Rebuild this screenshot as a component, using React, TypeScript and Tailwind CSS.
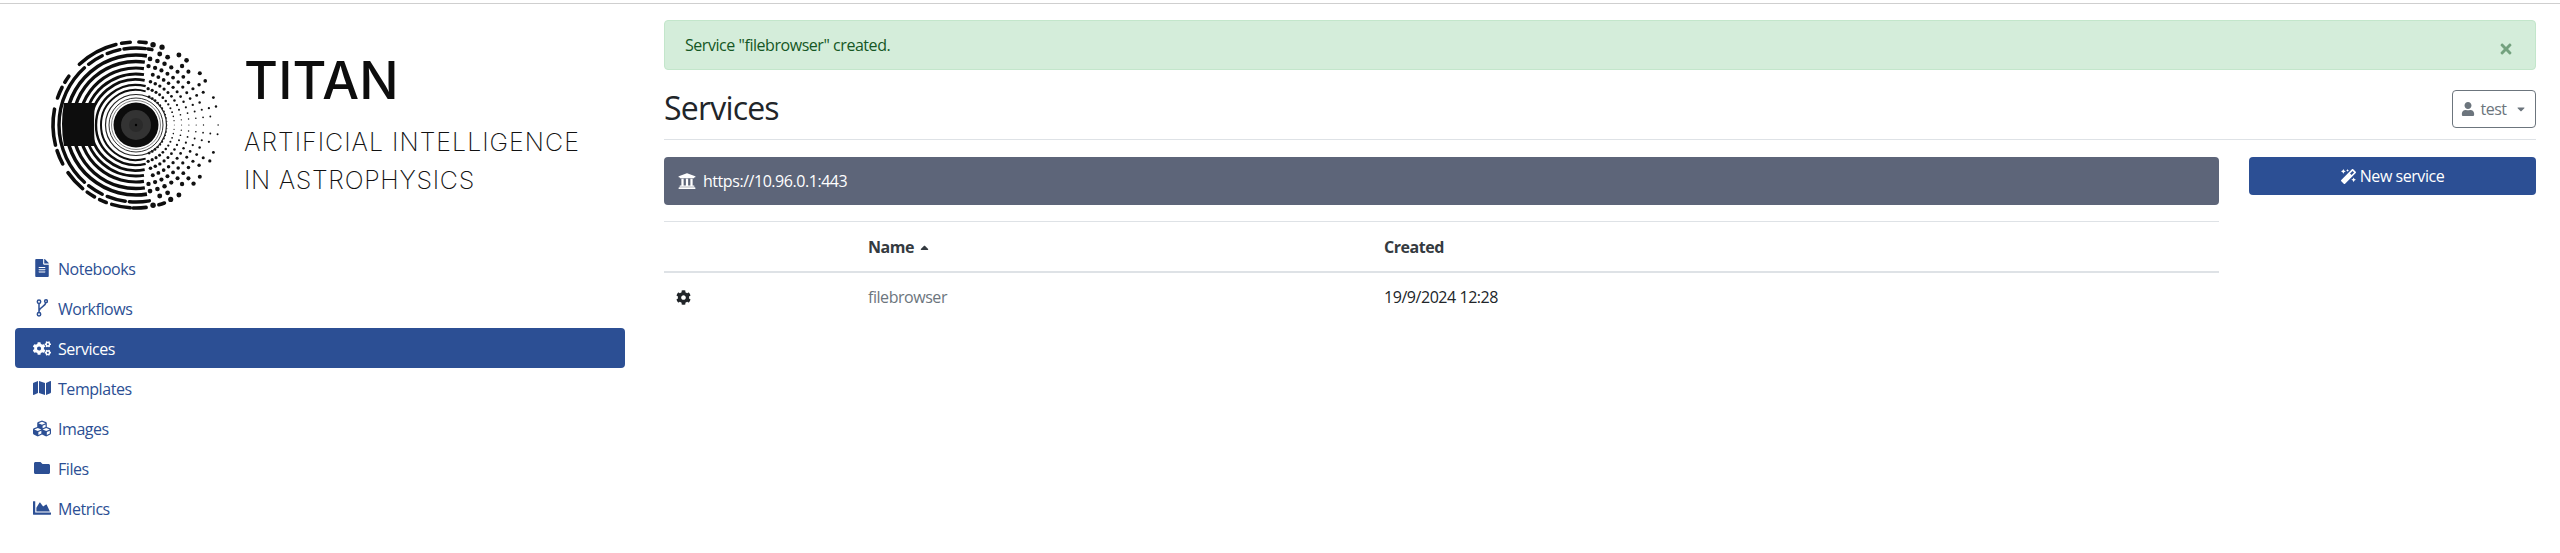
import { FaCaretDown, FaCaretUp, FaChartArea, FaCog, FaCogs, FaCubes, FaFileAlt, FaFolder, FaMagic, FaMap, FaTimes, FaUniversity, FaUser } from 'react-icons/fa';

function ForkIcon({ className }: { className?: string }) {
  return (
    <svg viewBox="0 0 12 18" className={className} fill="none" stroke="currentColor" strokeWidth="1.5">
      <circle cx="3" cy="2.8" r="1.7" />
      <circle cx="3" cy="15.2" r="1.7" />
      <circle cx="10" cy="2.2" r="1.4" />
      <path d="M3 4.5V13.5M9.8 3.6C9.6 7.5 3.6 7.5 3 12" />
    </svg>
  );
}

const NAV = [
  { label: 'Notebooks', icon: FaFileAlt, size: 'text-[18px]' },
  { label: 'Workflows', icon: ForkIcon, size: 'w-[12px] h-[18px]' },
  { label: 'Services', icon: FaCogs, size: 'text-[19px]', active: true },
  { label: 'Templates', icon: FaMap, size: 'text-[18px]' },
  { label: 'Images', icon: FaCubes, size: 'text-[19px]' },
  { label: 'Files', icon: FaFolder, size: 'text-[16px]' },
  { label: 'Metrics', icon: FaChartArea, size: 'text-[18px]' },
];

const CX = 96;
const CY = 95;

// angle in degrees, 0 = top, counter-clockwise through the left side
function point(r: number, deg: number) {
  const a = (deg * Math.PI) / 180;
  return [CX - r * Math.sin(a), CY - r * Math.cos(a)];
}

function arc(r: number, from: number, to: number) {
  const [x1, y1] = point(r, from);
  const [x2, y2] = point(r, to);
  const large = to - from > 180 ? 1 : 0;
  return `M${x1.toFixed(2)} ${y1.toFixed(2)}A${r} ${r} 0 ${large} 0 ${x2.toFixed(2)} ${y2.toFixed(2)}`;
}

const OUTER: [number, number][] = [
  [-7, -2], [4, 10], [14, 43], [54, 59], [63, 71], [79, 104], [108, 118],
  [125, 140], [144, 150], [154, 159], [163, 176], [178, 187], [196, 200],
];
const SECOND: [number, number][] = [
  [-12, -9], [-7, 9], [12, 22], [26, 38], [42, 138], [142, 154], [158, 172], [175, 190],
];
const RINGS: [number, number, number][] = [
  [70, 3.6, 9], [63.5, 3.4, 8], [57, 3.2, 8], [51, 3, 9], [45.5, 2.8, 11], [40, 2.4, 14], [35, 2, 16],
];

const DOTS: { x: number; y: number; r: number }[] = [];
for (let deg = -78; deg <= 78; deg += 6.5) {
  const s = Math.abs(Math.sin((deg * Math.PI) / 180));
  for (let i = 0; i < 8; i++) {
    const r = 31 + i * 7.3;
    if (i > 5 && (Math.round(deg * 2) + i * 13) % 3 === 0) continue;
    const a = (deg * Math.PI) / 180;
    const x = CX + r * Math.cos(a);
    const y = CY + r * Math.sin(a);
    if (x < CX + 12) continue;
    DOTS.push({ x, y, r: 0.45 + s * 1.1 + (i / 7) * (0.3 + s * 0.9) });
  }
}

function TitanMark() {
  return (
    <svg viewBox="0 0 192 190" className="w-[192px] h-[190px] shrink-0">
      <defs>
        <clipPath id="left-half">
          <rect x="0" y="0" width={CX + 12} height="190" />
        </clipPath>
      </defs>
      <g fill="none" stroke="#0d0d0d" strokeLinecap="round">
        {OUTER.map(([a, b]) => (
          <path key={a} d={arc(83, a, b)} strokeWidth="3.6" />
        ))}
        {SECOND.map(([a, b]) => (
          <path key={a} d={arc(77, a, b)} strokeWidth="3.4" />
        ))}
      </g>
      <g clipPath="url(#left-half)" fill="none" stroke="#0d0d0d" strokeLinecap="butt">
        {RINGS.map(([r, w, gap]) => (
          <path key={r} d={arc(r, -gap, 180 + gap)} strokeWidth={w} />
        ))}
      </g>
      <path d="M24 73Q20 94 24 116L55 116Q53 94 55 73Z" fill="#0d0d0d" />
      {DOTS.map((d, i) => (
        <circle key={i} cx={d.x} cy={d.y} r={d.r} fill="#111" />
      ))}
      <circle cx={CX} cy={CY} r="30.5" fill="none" stroke="#222" strokeWidth="1.2" />
      <circle cx={CX} cy={CY} r="27" fill="none" stroke="#333" strokeWidth="1" />
      <circle cx={CX} cy={CY} r="24.5" fill="none" stroke="#555" strokeWidth="0.7" />
      <circle cx={CX} cy={CY} r="22.5" fill="#0c0c0c" />
      <circle cx={CX} cy={CY} r="15" fill="#333" />
      <circle cx={CX} cy={CY} r="7" fill="#2a2a2a" />
      <circle cx={CX} cy={CY} r="1.2" fill="#000" />
    </svg>
  );
}

function Logo() {
  return (
    <div className="flex h-[230px] items-start pl-[40px] pt-[30px]">
      <TitanMark />
      <div className="ml-[12px] flex flex-col font-['Inter',sans-serif] whitespace-nowrap">
        <span className="mt-[26px] h-[50px] text-[52px] leading-[50px] font-medium tracking-[0.2px] text-[#0d0d0d]">TITAN</span>
        <span className="mt-[24px] h-[24px] text-[25px] leading-[24px] font-extralight tracking-[1px] text-[#111]">ARTIFICIAL INTELLIGENCE</span>
        <span className="mt-[14px] h-[24px] text-[25px] leading-[24px] font-extralight tracking-[0.7px] text-[#111]">IN ASTROPHYSICS</span>
      </div>
    </div>
  );
}

export default function App() {
  return (
    <div className="h-[553px] overflow-hidden bg-white font-['Open_Sans','Noto_Sans',sans-serif] text-[16px] tracking-[-0.45px] text-[#212529]">
      <div className="h-[4px] border-b border-[#cfcfcf]" />
      <div className="flex">
        {/* Sidebar */}
        <aside className="w-[649px] shrink-0 pl-[15px] pr-[24px]">
          <div className="-ml-[15px] -mt-[4px]">
            <Logo />
          </div>
          <nav className="mt-[18px] flex flex-col">
            {NAV.map(({ label, icon: Icon, size, active }) => (
              <a
                key={label}
                className={`flex h-[40px] items-center rounded-[4px] pl-[18px] ${
                  active ? 'bg-[#2c4f94] text-white' : 'text-[#2c4f94]'
                }`}
              >
                <span className="flex w-[18px] justify-center">
                  <Icon className={size} />
                </span>
                <span className="ml-[7px] mt-[2px]">{label}</span>
              </a>
            ))}
          </nav>
        </aside>

        {/* Main */}
        <main className="min-w-0 flex-1 pt-[16px] pl-[15px] pr-[24px]">
          <div className="flex h-[50px] items-center justify-between rounded-[4px] border border-[#c3e6cb] bg-[#d4edda] pl-[20px] pr-[21px] text-[#155724]">
            <span className="-mt-[1px]">Service "filebrowser" created.</span>
            <FaTimes className="mt-[7px] text-[16px] text-[#155724] opacity-50" />
          </div>

          <div className="mt-[20px] flex h-[50px] items-start justify-between border-b border-[#dee2e6]">
            <h2 className="text-[32px] leading-[36px] font-normal tracking-[-0.8px]">Services</h2>
            <button
              type="button"
              className="flex h-[38px] w-[84px] items-center justify-center rounded-[4px] border border-[#6c757d] text-[#6c757d]"
            >
              <FaUser className="text-[14px]" />
              <span className="ml-[5px]">test</span>
              <FaCaretDown className="ml-[8px] text-[12px]" />
            </button>
          </div>

          <div className="mt-[17px] flex gap-[30px]">
            <div className="min-w-0 flex-1">
              <div className="flex h-[48px] items-center rounded-[4px] bg-[#5d6579] pl-[14px] text-white">
                <FaUniversity className="text-[18px]" />
                <span className="ml-[7px]">https://10.96.0.1:443</span>
              </div>

              <table className="mt-[16px] w-full table-fixed border-collapse text-left">
                <thead>
                  <tr className="h-[50px] border-t border-[#dee2e6] border-b-2">
                    <th className="w-[192px]" />
                    <th className="w-[516px] pl-[12px] pt-[2px] font-bold text-[#343a40]">
                      <span className="inline-flex items-center">
                        Name <FaCaretUp className="ml-[4px] text-[13px]" />
                      </span>
                    </th>
                    <th className="pl-[12px] pt-[2px] font-bold text-[#343a40]">Created</th>
                  </tr>
                </thead>
                <tbody>
                  <tr className="h-[50px]">
                    <td className="pl-[12px]">
                      <FaCog className="text-[15px]" />
                    </td>
                    <td className="pl-[12px] text-[#6c757d]">filebrowser</td>
                    <td className="pl-[12px]">19/9/2024 12:28</td>
                  </tr>
                </tbody>
              </table>
            </div>

            <div className="w-[287px] shrink-0">
              <button
                type="button"
                className="flex h-[38px] w-full items-center justify-center rounded-[4px] bg-[#2c4f94] text-white"
              >
                <FaMagic className="text-[15px]" />
                <span className="ml-[4px]">New service</span>
              </button>
            </div>
          </div>
        </main>
      </div>
    </div>
  );
}
